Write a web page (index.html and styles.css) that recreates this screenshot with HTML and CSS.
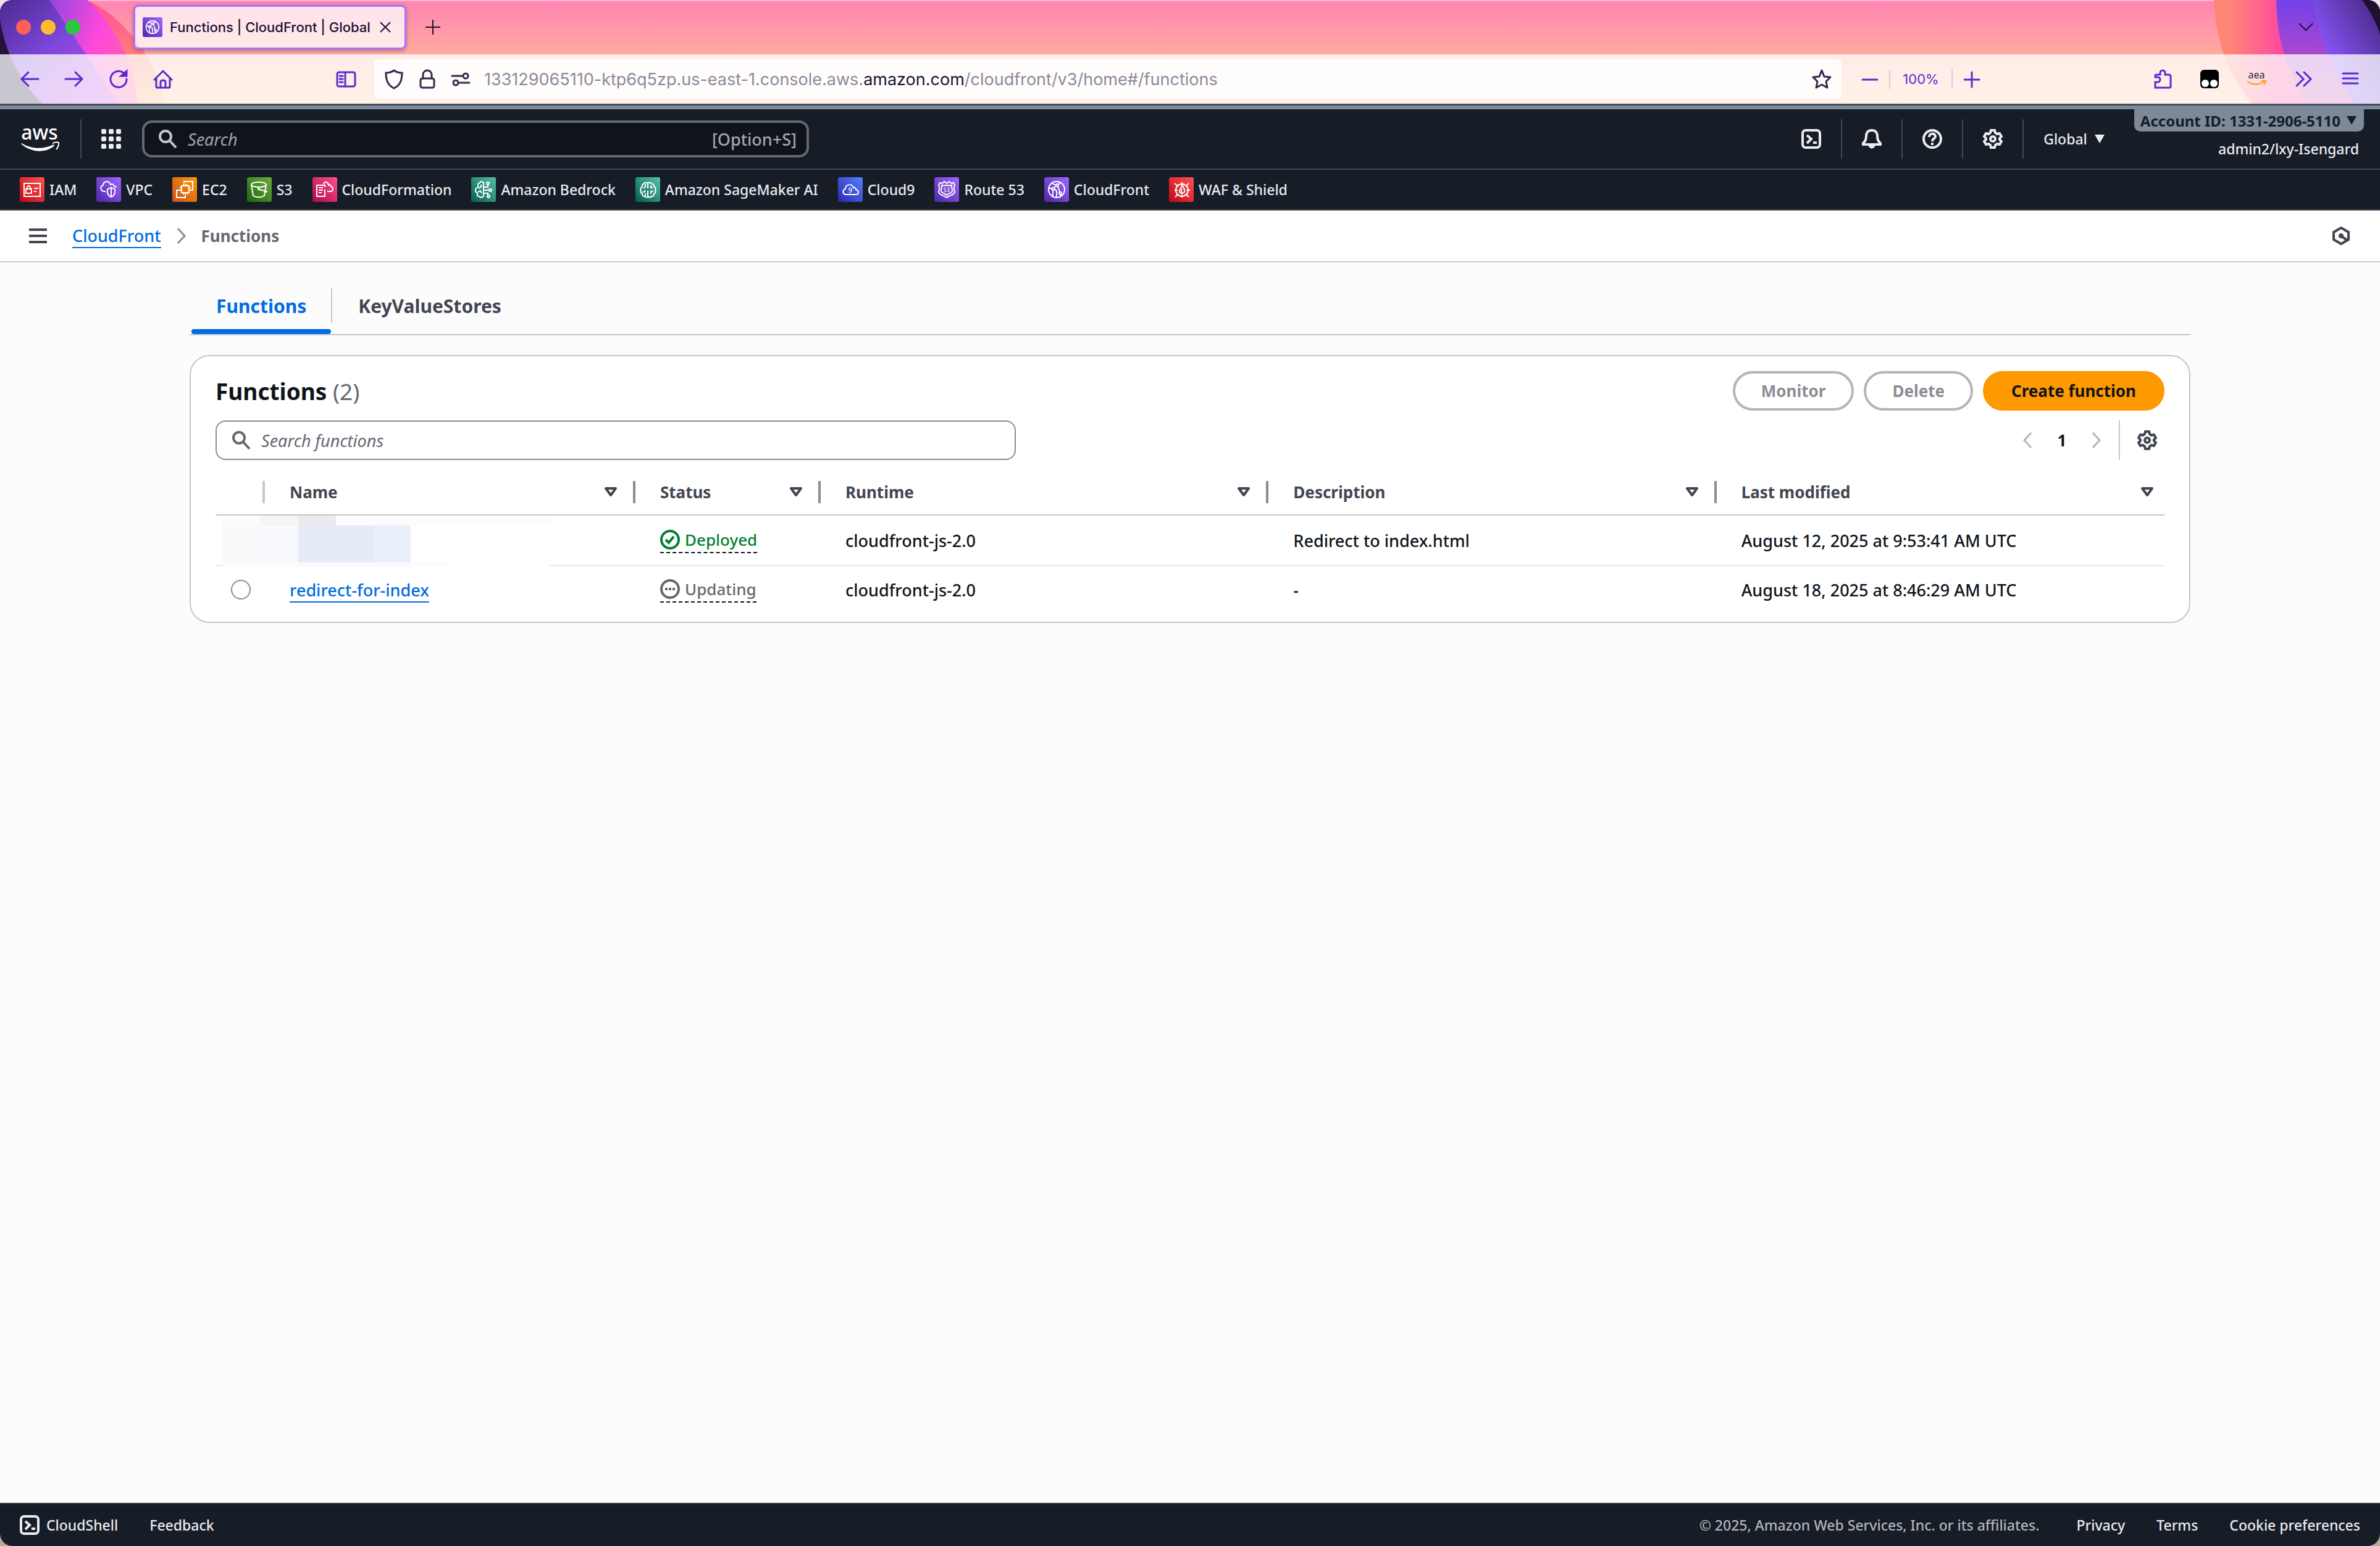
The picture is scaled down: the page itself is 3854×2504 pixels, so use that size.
FILE: index.html
```html
<!DOCTYPE html>
<html lang="en">
<head>
    <meta charset="UTF-8">
    <meta name="viewport" content="width=device-width, initial-scale=1.0">
    <title>Functions | CloudFront | Global</title>
    <link rel="stylesheet" href="styles.css">
</head>
<body>
    <!-- Shared icons -->
    <svg class="defs" width="0" height="0" aria-hidden="true">
        <defs>
            <linearGradient id="gRed" x1="0" y1="1" x2="1" y2="0"><stop offset="0" stop-color="#bd0816"/><stop offset="1" stop-color="#ff5252"/></linearGradient>
            <linearGradient id="gPurple" x1="0" y1="1" x2="1" y2="0"><stop offset="0" stop-color="#4d27a8"/><stop offset="1" stop-color="#a166ff"/></linearGradient>
            <linearGradient id="gOrange" x1="0" y1="1" x2="1" y2="0"><stop offset="0" stop-color="#c8511b"/><stop offset="1" stop-color="#ff9900"/></linearGradient>
            <linearGradient id="gGreen" x1="0" y1="1" x2="1" y2="0"><stop offset="0" stop-color="#1b660f"/><stop offset="1" stop-color="#6cae3e"/></linearGradient>
            <linearGradient id="gPink" x1="0" y1="1" x2="1" y2="0"><stop offset="0" stop-color="#b0084d"/><stop offset="1" stop-color="#ff4f8b"/></linearGradient>
            <linearGradient id="gTeal" x1="0" y1="1" x2="1" y2="0"><stop offset="0" stop-color="#055f4e"/><stop offset="1" stop-color="#56c0a7"/></linearGradient>
            <linearGradient id="gBlue" x1="0" y1="1" x2="1" y2="0"><stop offset="0" stop-color="#2e27ad"/><stop offset="1" stop-color="#527fff"/></linearGradient>
        </defs>
        <symbol id="search" viewBox="0 0 32 32"><circle cx="12" cy="12" r="9"/><path d="M18 18l11 12"/></symbol>
        <symbol id="gear" viewBox="0 0 32 32"><path d="M13 2h6l1 4 3 2 4-1 3 5-3 3v2l3 3-3 5-4-1-3 2-1 4h-6l-1-4-3-2-4 1-3-5 3-3v-2l-3-3 3-5 4 1 3-2z"/><circle cx="16" cy="16" r="4"/></symbol>
        <symbol id="shell" viewBox="0 0 32 32"><rect x="2" y="2" width="28" height="28" rx="5"/><path d="M9 10l7 6-7 7M19 22h6"/></symbol>
        <symbol id="filter" viewBox="0 0 20 16"><path d="M2 2h16l-8 11z"/></symbol>
        <symbol id="caret" viewBox="0 0 16 14"><path d="M0 0h16L8 14z"/></symbol>
        <symbol id="cloudfront" viewBox="0 0 40 40">
            <rect width="40" height="40" rx="3" fill="url(#gPurple)" stroke="none"/>
            <g fill="none" stroke="#fff" stroke-width="2"><circle cx="20" cy="20" r="13"/><circle cx="21" cy="13" r="2"/><circle cx="14" cy="19" r="2"/><circle cx="26" cy="26" r="2"/><path d="M19 14l-4 4M22 15l3 9M12 9c2 3 5 3 7 3M14 21v10M16 19c5 2 5 8 3 14M27 28l-2 4M8 18h4M23 12l3-4"/></g>
        </symbol>
    </svg>

    <div class="window">
        <div class="chrome">
            <svg class="theme theme-left" viewBox="0 0 280 168">
                <defs>
                    <linearGradient id="t1" x1="0" y1="0" x2="0" y2="1"><stop offset="0" stop-color="#ff4f9a"/><stop offset=".6" stop-color="#ff8577"/><stop offset="1" stop-color="#ffb070"/></linearGradient>
                    <linearGradient id="t2" x1="0" y1="0" x2="1" y2=".3"><stop offset=".3" stop-color="#8a45e0"/><stop offset=".75" stop-color="#ff48dc"/><stop offset="1" stop-color="#ff5cb0"/></linearGradient>
                    <linearGradient id="t3" x1="0" y1="0" x2="1" y2="1"><stop offset="0" stop-color="#4b2a90"/><stop offset=".45" stop-color="#7e47dc"/><stop offset="1" stop-color="#dc4ae0"/></linearGradient>
                </defs>
                <path d="M141 0C205 30 255 100 268 168H0V0z" fill="url(#t1)"/>
                <path d="M141 0C190 45 220 105 222 168H0V0z" fill="url(#t2)"/>
                <path d="M0 0h80l113 168H0z" fill="url(#t3)"/>
                <path d="M0 32C10 90 32 130 68 168H0z" fill="#251438"/>
            </svg>
            <svg class="theme theme-right" viewBox="0 0 300 168">
                <defs>
                    <linearGradient id="t4" x1="0" y1="0" x2="1" y2="0"><stop offset=".1" stop-color="#ff8577"/><stop offset=".4" stop-color="#ff4b9f"/></linearGradient>
                    <linearGradient id="t5" x1="0" y1="0" x2="0" y2="1"><stop offset="0" stop-color="#7340e8"/><stop offset=".5" stop-color="#a648d0"/><stop offset="1" stop-color="#d04fb0"/></linearGradient>
                    <linearGradient id="t6" x1="0" y1="1" x2="1" y2="0"><stop offset="0" stop-color="#9a5cff"/><stop offset=".4" stop-color="#8250ea"/><stop offset="1" stop-color="#43257f"/></linearGradient>
                </defs>
                <path d="M31 0C34 60 48 110 92 168H300V0z" fill="url(#t4)"/>
                <path d="M132 0C133 60 146 110 181 168H300V0z" fill="url(#t5)"/>
                <path d="M192 0C200 60 220 110 256 168H300V0z" fill="url(#t6)"/>
                <path d="M271 0c14 20 24 38 29 56V0z" fill="#1f1030"/>
            </svg>

            <div class="tab-strip">
                <div class="lights"><span class="light red"></span><span class="light yellow"></span><span class="light green"></span></div>
                <div class="browser-tab">
                    <svg width="32" height="32"><use href="#cloudfront"/></svg>
                    <span class="tab-title">Functions | CloudFront | Global</span>
                    <button class="icon-btn" aria-label="Close tab"><svg width="18" height="18" viewBox="0 0 18 18" fill="none" stroke="#1d1133" stroke-width="2"><path d="M1 1l16 16M17 1L1 17"/></svg></button>
                </div>
                <button class="icon-btn new-tab" aria-label="New tab"><svg width="24" height="24" viewBox="0 0 24 24" fill="none" stroke="#1d1133" stroke-width="2"><path d="M12 0v24M0 12h24"/></svg></button>
                <button class="icon-btn all-tabs" aria-label="List all tabs"><svg width="24" height="14" viewBox="0 0 24 14" fill="none" stroke="#1d1133" stroke-width="2"><path d="M1 1l11 11L23 1"/></svg></button>
            </div>

            <div class="toolbar">
                <div class="nav-buttons">
                    <button class="icon-btn" aria-label="Back"><svg class="ff" viewBox="0 0 32 32"><path d="M30 16H3M14 5L3 16l11 11"/></svg></button>
                    <button class="icon-btn" aria-label="Forward"><svg class="ff" viewBox="0 0 32 32"><path d="M2 16h27M18 5l11 11-11 11"/></svg></button>
                    <button class="icon-btn" aria-label="Reload"><svg class="ff" viewBox="0 0 32 32"><path d="M29 16A13 13 0 1 1 25 7l3 3"/><path d="M29 3v8h-9z" fill="#5b2bd0"/></svg></button>
                    <button class="icon-btn" aria-label="Home"><svg class="ff" viewBox="0 0 32 32"><path d="M2 17L16 3l14 14M5 15v13q0 2 2 2h18q2 0 2-2V15M12 30v-9q0-3 4-3t4 3v9"/></svg></button>
                </div>
                <button class="icon-btn sidebar-btn" aria-label="Sidebar"><svg class="ff" viewBox="0 0 32 32"><rect x="2" y="5" width="29" height="23" rx="3"/><path d="M15 5v23M6 11h5M6 16h5M6 21h5"/></svg></button>
                <div class="url-bar">
                    <svg class="ff dark" viewBox="0 0 32 32"><path d="M16 2c4 3 8 4 13 4 0 12-3 20-13 25C6 26 3 18 3 6c5 0 9-1 13-4z"/></svg>
                    <svg class="ff dark" viewBox="0 0 32 32"><rect x="5" y="15" width="22" height="15" rx="3"/><path d="M9 15V9a7 7 0 0 1 14 0v6"/></svg>
                    <svg class="ff dark" viewBox="0 0 32 32"><path d="M2 11h16M14 22h16"/><circle cx="24" cy="11" r="4"/><circle cx="8" cy="22" r="4"/></svg>
                    <div class="url" role="textbox" aria-label="Address">133129065110-ktp6q5zp.us-east-1.console.aws.<span class="domain">amazon.com</span>/cloudfront/v3/home#/functions</div>
                    <svg class="ff dark" viewBox="0 0 32 32"><path d="M16 2l4 10 10 1-7 7 2 10-9-5-9 5 2-10-7-7 10-1z" stroke-linejoin="round"/></svg>
                </div>
                <div class="zoom">
                    <button class="icon-btn" aria-label="Zoom out"><svg class="ff" viewBox="0 0 32 32"><path d="M4 17h24"/></svg></button>
                    <span class="zoom-level">100%</span>
                    <button class="icon-btn" aria-label="Zoom in"><svg class="ff" viewBox="0 0 32 32"><path d="M4 17h24M16 5v24"/></svg></button>
                </div>
                <div class="extensions">
                    <button class="icon-btn" aria-label="Extensions"><svg class="ff" viewBox="0 0 32 32"><path d="M4 30V21h4a4 4 0 0 0 0-8H4v-2q0-2 2-2h6V6a4 4 0 0 1 8 0v3h6q3 0 3 3v16q0 2-2 2z"/></svg></button>
                    <button class="icon-btn" aria-label="Tampermonkey"><svg width="32" height="32" viewBox="0 0 32 32"><rect x="1" y="1" width="30" height="30" rx="6"/><circle cx="9" cy="23" r="6" fill="#fff"/><circle cx="23" cy="23" r="6" fill="#fff"/></svg></button>
                    <button class="icon-btn" aria-label="aea"><svg width="32" height="32" viewBox="0 0 32 32"><text x="16" y="15" text-anchor="middle" font-family="Noto Sans" font-size="16" fill="#222f3e">aea</text><path d="M1 20q14 9 27 0M24 19h7l-3 6" fill="none" stroke="#ff9900" stroke-width="2"/></svg></button>
                    <button class="icon-btn" aria-label="More tools"><svg class="ff" viewBox="0 0 32 32"><path d="M5 5l11 11L5 27M17 5l11 11-11 11"/></svg></button>
                    <button class="icon-btn" aria-label="Menu"><svg class="ff" viewBox="0 0 32 32"><path d="M4 7h24M4 15h24M4 23h24"/></svg></button>
                </div>
            </div>
        </div>

        <header class="aws-header">
            <div class="aws-nav">
                <a class="logo" href="#" aria-label="AWS"><svg width="66" height="80" viewBox="0 -16 66 80"><text x="32" y="25" text-anchor="middle" font-family="Noto Sans" font-weight="500" font-size="32" fill="#fff">aws</text><path d="M2 32c18 15 40 15 54 3l-1-2c-16 8-36 8-52-2z" fill="#fff"/><path d="M53 31c5-2 9-2 10-1 1 2-1 8-4 11" fill="none" stroke="#fff" stroke-width="2"/></svg></a>
                <span class="divider"></span>
                <button class="icon-btn" aria-label="Services"><svg width="32" height="32" viewBox="0 0 32 32" fill="#ebebf0"><rect width="8" height="8" rx="2"/><rect x="12" width="8" height="8" rx="2"/><rect x="24" width="8" height="8" rx="2"/><rect y="12" width="8" height="8" rx="2"/><rect x="12" y="12" width="8" height="8" rx="2"/><rect x="24" y="12" width="8" height="8" rx="2"/><rect y="24" width="8" height="8" rx="2"/><rect x="12" y="24" width="8" height="8" rx="2"/><rect x="24" y="24" width="8" height="8" rx="2"/></svg></button>
                <label class="aws-search">
                    <svg class="line" width="32" height="32"><use href="#search"/></svg>
                    <input type="text" placeholder="Search" aria-label="Search">
                    <span>[Option+S]</span>
                </label>
                <div class="aws-tools">
                    <button class="icon-btn" aria-label="CloudShell"><svg class="line" width="32" height="32"><use href="#shell"/></svg></button>
                    <span class="divider"></span>
                    <button class="icon-btn" aria-label="Notifications"><svg class="line" width="32" height="32" viewBox="0 0 32 32"><path d="M16 2c-6 0-9 4-9 9 0 7-2 9-5 12v2h28v-2c-3-3-5-5-5-12 0-5-3-9-9-9z"/><path d="M12 26q4 7 8 0z" fill="#ebebf0"/></svg></button>
                    <span class="divider"></span>
                    <button class="icon-btn" aria-label="Help"><svg class="line" width="32" height="32" viewBox="0 0 32 32"><circle cx="16" cy="16" r="14"/><path d="M11 13c0-7 10-7 10-1 0 4-5 3-5 8M16 22v4"/></svg></button>
                    <span class="divider"></span>
                    <button class="icon-btn" aria-label="Settings"><svg class="line" width="32" height="32"><use href="#gear"/></svg></button>
                    <span class="divider"></span>
                    <button class="region">Global <svg width="16" height="14"><use href="#caret"/></svg></button>
                </div>
                <div class="account">
                    <button class="account-id">Account ID: 1331-2906-5110 <svg width="16" height="14"><use href="#caret"/></svg></button>
                    <span class="account-user">admin2/lxy-Isengard</span>
                </div>
            </div>

            <nav class="favorites">
                <a href="#"><svg class="svc" viewBox="0 0 40 40"><rect class="bg" width="40" height="40" rx="3" fill="url(#gRed)"/><path d="M7 10h26v21H7zM10 19h9v7h-9zM12 19v-3q3-4 5 0v3M23 18h7M23 23h4"/></svg>IAM</a>
                <a href="#"><svg class="svc" viewBox="0 0 40 40"><rect class="bg" width="40" height="40" rx="3" fill="url(#gPurple)"/><path d="M15 23h-3c-6-1-6-9-1-10 0-7 10-8 12-1 4-2 6 1 6 3q3 0 3 2M24 17q-5 1-6 3v5q1 5 6 7 5-2 6-7v-5q-1-2-6-3zM24 17v15"/></svg>VPC</a>
                <a href="#"><svg class="svc" viewBox="0 0 40 40"><rect class="bg" width="40" height="40" rx="3" fill="url(#gOrange)"/><path d="M15 14h12v11H15zM18 11v3M21 11v3M24 11v3M18 25v3M21 25v3M24 25v3M12 17h3M12 21h3M27 17h3M27 21h3M19 10V7h14v14h-3M12 21H7v12h14v-4"/></svg>EC2</a>
                <a href="#"><svg class="svc" viewBox="0 0 40 40"><rect class="bg" width="40" height="40" rx="3" fill="url(#gGreen)"/><ellipse cx="19" cy="12" rx="12" ry="4"/><path d="M7 12l3 18q9 5 18 0l3-18M20 20l12 3q0 2-3 0"/><circle cx="19" cy="19" r="1"/></svg>S3</a>
                <a href="#"><svg class="svc" viewBox="0 0 40 40"><rect class="bg" width="40" height="40" rx="3" fill="url(#gPink)"/><path d="M16 13H7v18h13V20M10 17h7M10 21h7M10 25h5M16 13h4v3M18 11c2-5 8-3 8 2q3-2 4 2c4 1 4 7 0 8h-6"/></svg>CloudFormation</a>
                <a href="#"><svg class="svc" viewBox="0 0 40 40"><rect class="bg" width="40" height="40" rx="3" fill="url(#gTeal)"/><path d="M20 8l-4-1-5 4v5l-4 3v4l3 3v4l6 3 4-2M20 8v23M16 12v4l-4 2M11 24l4-2 2 4M20 16h7v-4M20 21h9M20 26h7v4"/><circle cx="27" cy="10" r="2"/><circle cx="31" cy="21" r="2"/><circle cx="28" cy="31" r="2"/></svg>Amazon Bedrock</a>
                <a href="#"><svg class="svc" viewBox="0 0 40 40"><rect class="bg" width="40" height="40" rx="3" fill="url(#gTeal)"/><path d="M20 10q-4-3-7 1-3 1-2 5-4 2-2 5-2 4 2 6 0 4 4 4 3 3 5 0 3 3 6 0 4 0 4-4 4-2 2-6 2-4-2-6 0-4-3-4-3-4-7-1zM20 10v8M20 22v9M16 11v5l-3 2M11 24h3l2-3M25 13v4h3M29 23h-4v4M16 26v4"/></svg>Amazon SageMaker AI</a>
                <a href="#"><svg class="svc" viewBox="0 0 40 40"><rect class="bg" width="40" height="40" rx="3" fill="url(#gBlue)"/><path d="M13 28c-6 0-6-8-1-9 0-8 11-9 13-2 3-1 4 1 4 3 5 1 5 8 0 8z"/><text x="20" y="25" font-size="11">9</text></svg>Cloud9</a>
                <a href="#"><svg class="svc" viewBox="0 0 40 40"><rect class="bg" width="40" height="40" rx="3" fill="url(#gPurple)"/><path d="M20 10l4-3 3 3 4-1 2 4c-3 4 0 8 0 11-1 5-8 5-13 9-5-4-12-4-13-9 0-3 3-7 0-11l2-4 4 1 3-3zM20 13q4 1 8 0c-1 4 2 7 1 10-1 3-6 3-9 6-3-3-8-3-9-6-1-3 2-6 1-10q4 1 8 0z"/><text x="20" y="24" font-size="9">53</text></svg>Route 53</a>
                <a href="#"><svg class="svc" viewBox="0 0 40 40"><use href="#cloudfront"/></svg>CloudFront</a>
                <a href="#"><svg class="svc" viewBox="0 0 40 40"><rect class="bg" width="40" height="40" rx="3" fill="url(#gRed)"/><circle cx="21" cy="21" r="10"/><path d="M21 8v6M21 28v5M9 21h5M28 21h6M9 10l6 5M32 10l-5 5M10 32l5-5M32 32l-5-5M22 14c-7 8-6 12-1 12s6-4 1-12zM21 19c-2 4-1 6 1 6"/></svg>WAF &amp; Shield</a>
            </nav>
        </header>

        <div class="breadcrumbs">
            <button class="icon-btn" aria-label="Open navigation"><svg width="30" height="24" viewBox="0 0 30 24" stroke="#424650" stroke-width="4"><path d="M0 2h29M0 12h29M0 22h29"/></svg></button>
            <a class="crumb link" href="#">CloudFront</a>
            <svg width="16" height="26" viewBox="0 0 16 26" fill="none" stroke="#8c8c94" stroke-width="3"><path d="M2 1l11 12L2 25"/></svg>
            <span class="crumb-current">Functions</span>
            <button class="icon-btn help-btn" aria-label="Tools"><svg width="32" height="32" viewBox="0 0 32 32" fill="none" stroke="#424650" stroke-width="4"><path d="M16 3l12 7v12l-12 7-12-7V10z"/><circle cx="16" cy="16" r="2" fill="#424650"/><path d="M17 17l9 6"/></svg></button>
        </div>

        <main class="content">
            <div class="tabs" role="tablist">
                <button class="tab active" role="tab" aria-selected="true">Functions</button>
                <span class="tab-divider"></span>
                <button class="tab" role="tab">KeyValueStores</button>
            </div>

            <section class="card">
                <div class="card-row">
                    <h2>Functions <span class="count">(2)</span></h2>
                    <div class="actions">
                        <button class="btn" disabled>Monitor</button>
                        <button class="btn" disabled>Delete</button>
                        <button class="btn primary">Create function</button>
                    </div>
                </div>
                <div class="card-row">
                    <label class="table-search">
                        <svg width="32" height="32"><use href="#search"/></svg>
                        <input type="text" placeholder="Search functions" aria-label="Search functions">
                    </label>
                    <div class="pagination">
                        <button class="icon-btn" aria-label="Previous page"><svg width="16" height="26" viewBox="0 0 16 26"><path d="M14 1L3 13l11 12"/></svg></button>
                        <span class="page">1</span>
                        <button class="icon-btn" aria-label="Next page"><svg width="16" height="26" viewBox="0 0 16 26"><path d="M2 1l11 12L2 25"/></svg></button>
                        <span class="page-divider"></span>
                        <button class="icon-btn" aria-label="Preferences"><svg class="prefs" width="32" height="32"><use href="#gear"/></svg></button>
                    </div>
                </div>

                <div class="table-wrap">
                    <table>
                        <colgroup>
                            <col class="col-select"><col class="col-name"><col class="col-status"><col class="col-wide"><col class="col-wide"><col class="col-wide">
                        </colgroup>
                        <thead>
                            <tr>
                                <th><div class="th select"></div></th>
                                <th><div class="th">Name <svg width="20" height="16"><use href="#filter"/></svg></div></th>
                                <th><div class="th">Status <svg width="20" height="16"><use href="#filter"/></svg></div></th>
                                <th><div class="th">Runtime <svg width="20" height="16"><use href="#filter"/></svg></div></th>
                                <th><div class="th">Description <svg width="20" height="16"><use href="#filter"/></svg></div></th>
                                <th><div class="th last">Last modified <svg width="20" height="16"><use href="#filter"/></svg></div></th>
                            </tr>
                        </thead>
                        <tbody>
                            <tr>
                                <td></td>
                                <td></td>
                                <td><span class="status deployed"><svg width="32" height="32" viewBox="0 0 32 32"><circle cx="16" cy="16" r="14"/><path d="M9 16l5 5 8-10"/></svg>Deployed</span></td>
                                <td>cloudfront-js-2.0</td>
                                <td>Redirect to index.html</td>
                                <td>August 12, 2025 at 9:53:41 AM UTC</td>
                            </tr>
                            <tr>
                                <td class="select-cell"><input type="radio" name="fn" aria-label="redirect-for-index"></td>
                                <td><a class="link" href="#">redirect-for-index</a></td>
                                <td><span class="status updating"><svg width="32" height="32" viewBox="0 0 32 32"><circle cx="16" cy="16" r="14"/><path d="M8 16h4M14 16h4M20 16h4"/></svg>Updating</span></td>
                                <td>cloudfront-js-2.0</td>
                                <td>-</td>
                                <td>August 18, 2025 at 8:46:29 AM UTC</td>
                            </tr>
                        </tbody>
                    </table>
                    <!-- redacted function name -->
                    <div class="mosaic">
                        <i class="m1"></i><i class="m2"></i><i class="m3"></i><i class="m1"></i><i class="m1"></i><i class="m1"></i><i class="m1"></i>
                        <i class="m4"></i><i class="m5"></i><i class="m6"></i><i class="m6"></i><i class="m7"></i><i></i><i></i>
                        <i class="m4"></i><i class="m1"></i><i class="m5"></i><i class="m5"></i><i class="m5"></i><i class="m1"></i><i></i>
                    </div>
                </div>
            </section>
        </main>

        <footer class="footer">
            <a href="#"><svg class="line" width="32" height="32"><use href="#shell"/></svg>CloudShell</a>
            <a href="#">Feedback</a>
            <span class="copyright">© 2025, Amazon Web Services, Inc. or its affiliates.</span>
            <a href="#">Privacy</a>
            <a href="#">Terms</a>
            <a href="#">Cookie preferences</a>
        </footer>
    </div>
</body>
</html>
```
FILE: styles.css
```css
* {
    box-sizing: border-box;
}

body {
    margin: 0;
    background: linear-gradient(#e6e4e4, #b5ab9c);
    font-family: "Noto Sans", "Open Sans", sans-serif;
    font-size: 27px;
    font-weight: 500;
    color: #0f141a;
}

svg {
    display: block;
    flex: none;
    overflow: visible;
}

a {
    text-decoration: none;
    color: inherit;
}

.defs {
    position: absolute;
}

.window {
    display: flex;
    flex-direction: column;
    min-height: 100vh;
    border-radius: 20px;
    overflow: hidden;
    background: #fcfcfd;
}

.icon-btn {
    padding: 0;
    border: none;
    background: none;
    cursor: pointer;
}

/* Browser chrome */
.chrome {
    position: relative;
    background: linear-gradient(#ff84b2, #ffaa9f 52%, #ffc89b);
    font-family: Inter, sans-serif;
    font-weight: 400;
    border-bottom: 3px solid #434e5c;
    box-shadow: inset 0 2px 0 rgba(255, 255, 255, 0.4);
}

.theme {
    position: absolute;
    top: 0;
    height: 168px;
}

.theme-left {
    left: 0;
    width: 280px;
}

.theme-right {
    right: 0;
    width: 300px;
    overflow: hidden;
}

.tab-strip {
    position: relative;
    display: flex;
    align-items: center;
    height: 88px;
    padding: 0 108px 0 26px;
}

.lights {
    display: flex;
    gap: 16px;
}

.light {
    width: 24px;
    height: 24px;
    border-radius: 50%;
}

.red { background: #ff5f57; }
.yellow { background: #febc2e; }
.green { background: #28c840; }

.browser-tab {
    display: flex;
    align-items: center;
    gap: 12px;
    width: 442px;
    height: 72px;
    margin-left: 86px;
    padding: 0 22px 0 12px;
    border: 3px solid #ac70ff;
    border-radius: 8px;
    background: rgba(255, 255, 255, 0.76);
    box-shadow: 0 2px 6px rgba(0, 0, 0, 0.3);
}

.tab-title {
    flex: 1;
    font-size: 22px;
    font-weight: 500;
    white-space: nowrap;
    color: #1d1133;
}

.new-tab {
    margin-left: 31px;
}

.all-tabs {
    margin-left: auto;
}

.toolbar {
    position: relative;
    display: flex;
    align-items: center;
    height: 80px;
    padding: 0 32px;
    background: rgba(255, 255, 255, 0.76);
}

.ff {
    width: 32px;
    height: 32px;
    fill: none;
    stroke: #5b2bd0;
    stroke-width: 3;
    stroke-linecap: round;
}

.ff.dark {
    stroke: #35284f;
}

.nav-buttons {
    display: flex;
    gap: 40px;
}

.sidebar-btn {
    margin-left: 264px;
}

.url-bar {
    display: flex;
    flex: 1;
    align-items: center;
    gap: 22px;
    height: 64px;
    margin-left: 30px;
    padding: 0 16px;
    border-radius: 8px;
    background: #fffdfb;
}

.url {
    flex: 1;
    font-size: 27px;
    color: #8e889b;
}

.domain {
    color: #1d1133;
}

.zoom {
    display: flex;
    align-items: center;
    gap: 15px;
    margin-left: 30px;
}

.zoom-level {
    width: 103px;
    border: solid #dcc8e0;
    border-width: 0 2px;
    line-height: 32px;
    font-size: 22px;
    text-align: center;
    color: #5b2bd0;
}

.extensions {
    display: flex;
    gap: 44px;
    margin-left: 277px;
}

/* AWS header */
.aws-header {
    border-top: 6px solid #7d8998;
    background: #161d26;
    color: #ebebf0;
}

.line {
    fill: none;
    stroke: #ebebf0;
    stroke-width: 4;
}

.aws-nav {
    display: flex;
    align-items: center;
    height: 98px;
    padding: 0 26px 0 32px;
    border-bottom: 2px solid #424650;
}

.divider {
    width: 2px;
    height: 64px;
    background: #424650;
}

.aws-nav > .divider {
    margin: 0 32px;
}

.aws-search {
    display: flex;
    flex: 0 1 1080px;
    align-items: center;
    gap: 16px;
    height: 60px;
    margin-left: 34px;
    padding: 0 16px 0 22px;
    border: 4px solid #656871;
    border-radius: 16px;
    background: #0f141a;
    color: #a4a4ad;
}

.aws-search .line {
    stroke: #c6c6cd;
}

input[type="text"] {
    flex: 1;
    min-width: 0;
    padding: 0;
    border: none;
    outline: none;
    background: none;
    font-family: inherit;
    font-size: 27px;
    color: inherit;
}

input::placeholder {
    font-style: italic;
    color: inherit;
    opacity: 1;
}

.aws-tools {
    display: flex;
    align-items: center;
    gap: 32px;
    margin-left: auto;
}

.region,
.account-id {
    display: flex;
    align-items: center;
    border: none;
    font-family: inherit;
    font-size: 24px;
    cursor: pointer;
}

.region {
    gap: 12px;
    padding: 0;
    background: none;
    font-size: 23px;
    font-weight: 500;
    color: #ebebf0;
    fill: #ebebf0;
}

.account {
    display: flex;
    flex-direction: column;
    align-self: flex-start;
    align-items: flex-end;
    margin-left: 48px;
}

.account-id {
    gap: 10px;
    height: 36px;
    padding: 0 12px 0 10px;
    border-radius: 0 0 10px 10px;
    background: #7d8998;
    font-weight: 700;
    color: #161d26;
    fill: #161d26;
}

.account-user {
    margin: 14px 8px 0 0;
    font-size: 23px;
    line-height: 28px;
}

.favorites {
    display: flex;
    align-items: center;
    gap: 32px;
    height: 66px;
    padding: 0 32px;
    border-bottom: 2px solid #424650;
    font-size: 23px;
}

.favorites a {
    display: flex;
    align-items: center;
    gap: 8px;
    white-space: nowrap;
}

.svc {
    width: 40px;
    height: 40px;
    fill: none;
    stroke: #fff;
    stroke-width: 2;
}

.svc .bg,
.svc text {
    stroke: none;
}

.svc text {
    fill: #fff;
    text-anchor: middle;
}

/* Breadcrumbs */
.breadcrumbs {
    display: flex;
    align-items: center;
    height: 84px;
    padding: 0 47px;
    border-bottom: 2px solid #c6c6cd;
    background: #fff;
}

.link {
    border-bottom: 2px solid #006ce0;
    line-height: 36px;
    color: #006ce0;
}

.crumb {
    margin: 0 25px 0 40px;
    padding-top: 2px;
}

.crumb-current {
    margin-left: 24px;
    font-size: 26px;
    font-weight: 700;
    color: #656871;
}

.help-btn {
    margin-left: auto;
}

/* Content */
.content {
    flex: 1;
    padding: 24px 307px 0;
}

.tabs {
    display: flex;
    align-items: center;
    height: 94px;
    padding-left: 3px;
    border-bottom: 2px solid #c6c6cd;
}

.tab {
    position: relative;
    height: 92px;
    padding: 0 40px;
    border: none;
    background: none;
    font-family: inherit;
    font-size: 30px;
    font-weight: 700;
    color: #424650;
    cursor: pointer;
}

.tab.active {
    color: #006ce0;
}

.tab.active::after {
    content: "";
    position: absolute;
    left: 0;
    right: 0;
    bottom: 0;
    height: 8px;
    border-radius: 4px;
    background: #006ce0;
}

.tab-divider {
    width: 2px;
    height: 56px;
    margin-right: 2px;
    background: #c6c6cd;
}

.card {
    display: flex;
    flex-direction: column;
    gap: 16px;
    margin-top: 32px;
    padding: 24px 40px 14px;
    border: 2px solid #c6c6cd;
    border-radius: 32px;
    background: #fff;
}

.card-row {
    display: flex;
    align-items: center;
    justify-content: space-between;
    height: 64px;
}

h2 {
    margin: 0;
    font-size: 37px;
}

.count {
    font-weight: 400;
    color: #656871;
}

.actions {
    display: flex;
    gap: 16px;
}

.btn {
    height: 64px;
    padding: 0 42px;
    border: 4px solid #b4b4bb;
    border-radius: 32px;
    background: #fff;
    font-family: inherit;
    font-size: 26px;
    font-weight: 700;
    color: #8c8c94;
}

.btn.primary {
    border-color: #ff9900;
    background: #ff9900;
    color: #0f141a;
}

.table-search {
    display: flex;
    flex: 0 1 1296px;
    align-items: center;
    gap: 16px;
    height: 64px;
    padding: 0 24px;
    border: 2px solid #8c8c94;
    border-radius: 16px;
    color: #656871;
}

.table-search svg,
.prefs {
    fill: none;
    stroke: #656871;
    stroke-width: 4;
}

.pagination {
    display: flex;
    align-items: center;
    padding-right: 12px;
    fill: none;
    stroke: #b4b4bb;
    stroke-width: 3;
}

.pagination .prefs {
    stroke: #424650;
}

.page {
    width: 96px;
    font-size: 26px;
    font-weight: 700;
    text-align: center;
}

.page-divider {
    width: 2px;
    height: 64px;
    margin: 0 28px;
    background: #c6c6cd;
}

.table-wrap {
    position: relative;
}

table {
    width: 100%;
    table-layout: fixed;
    border-collapse: separate;
    border-spacing: 0;
}

.col-select { width: 80px; }
.col-name { width: 600px; }
.col-status { width: 300px; }

th {
    height: 74px;
    padding: 0;
    border-bottom: 2px solid #c6c6cd;
}

.th {
    display: flex;
    align-items: center;
    justify-content: space-between;
    height: 36px;
    padding: 0 26px 0 40px;
    border-right: 4px solid #8c8c94;
    font-size: 26px;
    color: #424650;
}

.th svg {
    fill: none;
    stroke: #424650;
    stroke-width: 4;
    stroke-linejoin: round;
}

.th.select {
    border-color: #c6c6cd;
}

.th.last {
    padding-right: 18px;
    border: none;
}

td {
    height: 82px;
    padding: 0 0 0 40px;
    border-bottom: 2px solid #ebebf0;
}

tbody tr:last-child td {
    height: 76px;
    border: none;
}

.select-cell {
    padding-left: 25px;
}

input[type="radio"] {
    display: block;
    width: 32px;
    height: 32px;
    margin: 0;
    appearance: none;
    border: 2px solid #8c8c94;
    border-radius: 50%;
    background: #fff;
}

.status {
    display: inline-flex;
    align-items: center;
    gap: 8px;
    padding: 4px 0;
    border-bottom: 2px dashed #0f141a;
    font-size: 26px;
    line-height: 32px;
    vertical-align: middle;
}

.status svg {
    fill: none;
    stroke: currentColor;
    stroke-width: 4;
}

.deployed { color: #00802f; }
.updating { color: #656871; }

.mosaic {
    position: absolute;
    top: 74px;
    left: 11px;
    display: grid;
    grid-template-columns: 62px 61px 61px 61px 60px 61px 164px;
    grid-template-rows: 16px 60px 7px;
    background: #fff;
}

.m1 { background: #fcfcfc; }
.m2 { background: #f5f5f5; }
.m3 { background: #ebebeb; }
.m4 { background: #fafafa; }
.m5 { background: #f8faff; }
.m6 { background: #e6ebf8; }
.m7 { background: #eaf0fb; }

/* Footer */
.footer {
    display: flex;
    align-items: center;
    gap: 51px;
    height: 70px;
    padding: 0 32px;
    border-top: 2px solid #424650;
    background: #161d26;
    font-size: 23px;
    color: #ebebf0;
}

.footer a {
    display: flex;
    align-items: center;
    gap: 11px;
}

.copyright {
    margin: 0 9px 0 auto;
    color: #b4b4bb;
}
```
